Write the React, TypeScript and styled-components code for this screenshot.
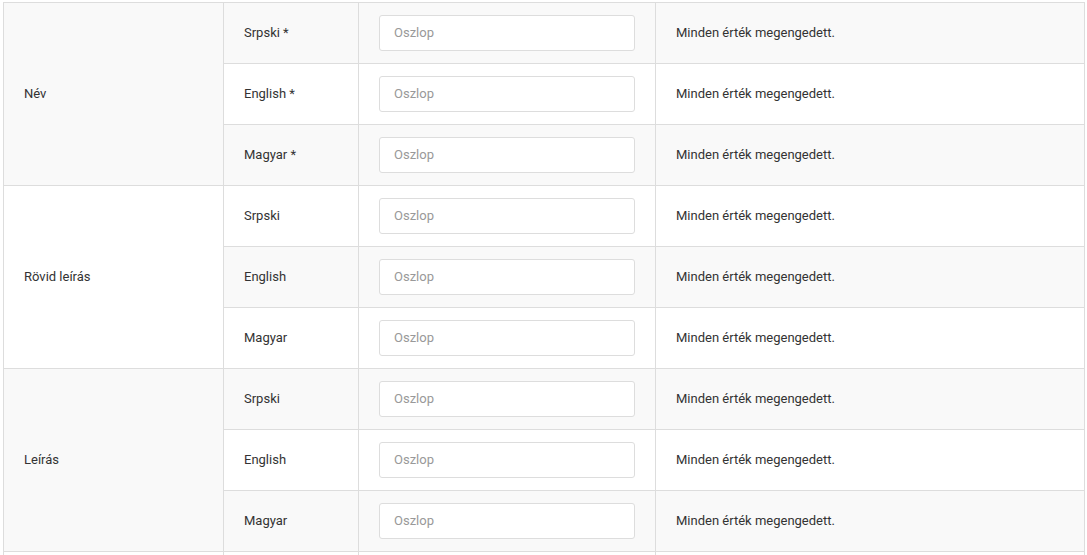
import React from "react";
import styled, { createGlobalStyle } from "styled-components";

const GlobalStyle = createGlobalStyle`
  html, body {
    margin: 0;
    padding: 0;
    background: #fff;
  }
  body {
    font-family: Roboto, "Liberation Sans", sans-serif;
    font-size: 13px;
    color: #333;
  }
`;

interface IField {
  label: string;
  required: boolean;
}

const languages = ["Srpski", "English", "Magyar"];

const fields: IField[] = [
  { label: "Név", required: true },
  { label: "Rövid leírás", required: false },
  { label: "Leírás", required: false },
];

const App = () => {
  let rowIndex = 0;
  return (
    <>
      <GlobalStyle />
      <Page>
        <Table>
          <colgroup>
            <col style={{ width: 220 }} />
            <col style={{ width: 135 }} />
            <col style={{ width: 297 }} />
            <col />
          </colgroup>
          <tbody>
            {fields.map((field) =>
              languages.map((lang, i) => {
                const striped = rowIndex++ % 2 === 0;
                return (
                  <Row key={field.label + lang} $striped={striped}>
                    {i === 0 && <Cell rowSpan={3}>{field.label}</Cell>}
                    <Cell>
                      {lang}
                      {field.required && " *"}
                    </Cell>
                    <InputCell>
                      <Input type="text" placeholder="Oszlop" />
                    </InputCell>
                    <Cell>Minden érték megengedett.</Cell>
                  </Row>
                );
              })
            )}
            <Row $striped={false}>
              <Cell>&nbsp;</Cell>
              <Cell />
              <InputCell />
              <Cell />
            </Row>
          </tbody>
        </Table>
      </Page>
    </>
  );
};

export default App;

const Page = styled.div`
  padding: 2px 3px 0 3px;
`;

const Table = styled.table`
  width: 1082px;
  border-collapse: collapse;
  table-layout: fixed;
`;

const Row = styled.tr<{ $striped: boolean }>`
  height: 61px;
  background-color: ${(props) => (props.$striped ? "#f9f9f9" : "#fff")};
`;

const Cell = styled.td`
  border: 1px solid #dddddd;
  padding: 0 20px;
  vertical-align: middle;
  line-height: 1.4;
`;

const InputCell = styled(Cell)`
  padding: 12px 20px;
`;

const Input = styled.input`
  box-sizing: border-box;
  display: block;
  width: 100%;
  height: 36px;
  padding: 0 14px 2px 14px;
  border: 1px solid #dddddd;
  border-radius: 3px;
  background: #fff;
  font-family: Roboto, "Liberation Sans", sans-serif;
  font-size: 13px;
  color: #333;
  outline: none;

  &::placeholder {
    color: #999;
  }
`;
